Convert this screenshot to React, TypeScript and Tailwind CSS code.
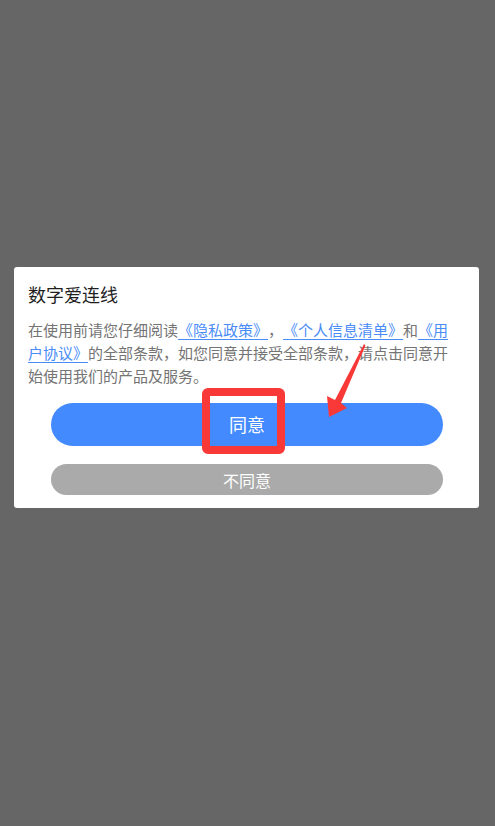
const font = {
  fontFamily: '"Noto Sans CJK SC", "Noto Sans", sans-serif',
};

function Link({ children }: { children: React.ReactNode }) {
  return (
    <a className="text-[#4a8cf7] underline decoration-[#4a8cf7] underline-offset-[3px]">
      {children}
    </a>
  );
}

export default function App() {
  return (
    <div
      className="relative h-[826px] w-full overflow-hidden bg-[#666666] pt-[267px] [text-spacing-trim:space-all]"
      style={font}
    >
      {/* Dialog */}
      <div className="ml-[14px] flex w-[465px] flex-col rounded-[3px] bg-white pb-[13px] pt-[14px]">
        <h1 className="px-[14px] text-[18px] leading-[26px] text-[#1f1f1f]">数字爱连线</h1>
        <p className="mt-[11px] whitespace-nowrap px-[14px] text-[15px] leading-[23px] text-[#747474]">
          在使用前请您仔细阅读<Link>《隐私政策》</Link>，<Link>《个人信息清单》</Link>和<Link>
            《用
            <br />
            户协议》
          </Link>
          的全部条款，如您同意并接受全部条款，请点击同意开
          <br />
          始使用我们的产品及服务。
        </p>
        <button className="ml-[37px] mt-[16px] flex h-[43px] w-[392px] items-center justify-center rounded-full bg-[#448aff] text-[18px] text-white">
          同意
        </button>
        <button className="ml-[37px] mt-[18px] flex h-[31px] w-[392px] items-center justify-center rounded-full bg-[#aaaaaa] text-[16px] text-white">
          不同意
        </button>
      </div>

      {/* Red annotation box */}
      <div className="pointer-events-none absolute left-[202px] top-[388px] h-[66px] w-[83px] rounded-[6px] border-[8px] border-[#f93838]" />

      {/* Red annotation arrow */}
      <svg
        className="pointer-events-none absolute left-0 top-0"
        width="495"
        height="826"
        viewBox="0 0 495 826"
      >
        <polygon
          points="364,344 365.5,345.5 341,403 347,408 329,417 327,396 335,400"
          fill="#f93838"
        />
      </svg>
    </div>
  );
}
